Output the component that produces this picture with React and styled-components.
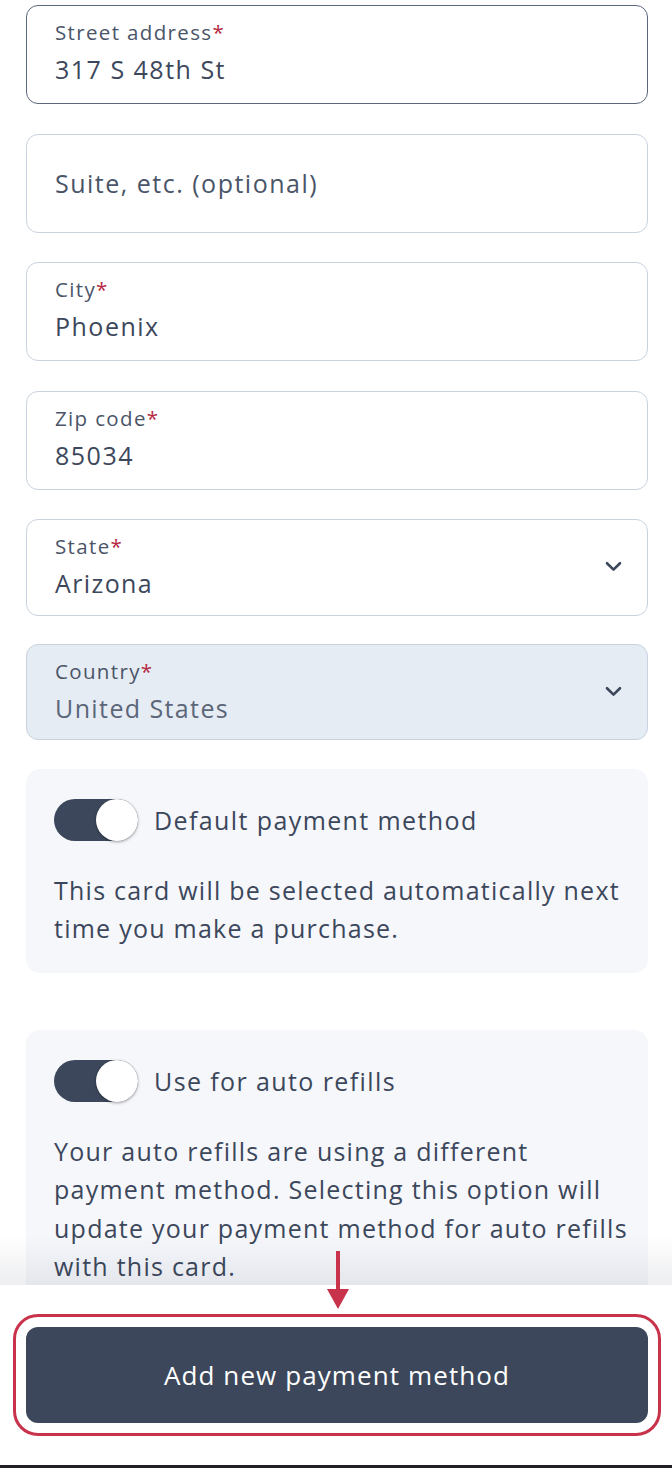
import React from "react";
import styled, { createGlobalStyle } from "styled-components";

const Global = createGlobalStyle`
  html, body { margin: 0; padding: 0; background: #fff; }
  body { font-family: "Open Sans", "Noto Sans", sans-serif; color: #3c475b; }
  * { box-sizing: border-box; }
`;

const Screen = styled.div`
  width: 672px;
  height: 1468px;
  display: flex;
  flex-direction: column;
  overflow: hidden;
  border-bottom: 3px solid #1f2124;
`;

const Scroll = styled.div`
  flex: 1;
  min-height: 0;
  overflow: hidden;
  padding: 5px 24px 0 26px;
  display: flex;
  flex-direction: column;
`;

const Field = styled.label`
  flex-shrink: 0;
  display: flex;
  flex-direction: column;
  justify-content: ${(p) => (p.$centered ? "center" : "flex-start")};
  height: ${(p) => p.$h || 99}px;
  margin-bottom: ${(p) => p.$mb ?? 29.5}px;
  padding: ${(p) => (p.$centered ? "0 28px" : "13px 28px 0 28px")};
  border: ${(p) => (p.$focused ? "1.5px solid #5b677b" : "1.5px solid #c9d2df")};
  border-radius: 12px;
  background: ${(p) => (p.$disabled ? "#e6ecf4" : "#fff")};
  position: relative;
`;

const Label = styled.span`
  font-size: 20.5px;
  line-height: 26px;
  color: #4a5568;
  letter-spacing: 1.35px;
`;

const Req = styled.span`
  color: #b5283f;
`;

const Input = styled.input`
  border: none;
  outline: none;
  background: transparent;
  padding: 0;
  margin-top: ${(p) => (p.$bare ? 0 : 6)}px;
  font-family: inherit;
  font-size: 25px;
  line-height: 36px;
  height: 36px;
  color: #3c475b;
  letter-spacing: 1.5px;
  &::placeholder {
    color: #4a5568;
    opacity: 1;
  }
`;

const Value = styled.span`
  margin-top: 6px;
  font-size: 25px;
  line-height: 36px;
  color: ${(p) => (p.$muted ? "#5b6679" : "#3c475b")};
  letter-spacing: 1.4px;
`;

const Chevron = styled.svg`
  position: absolute;
  right: 25px;
  top: 50%;
  margin-top: -6px;
  width: 17px;
  height: 11px;
`;

const Card = styled.section`
  flex-shrink: 0;
  background: #f5f7fb;
  border-radius: 14px;
  padding: 30px 18px 25px 28px;
  margin-bottom: ${(p) => p.$mb || 0}px;
`;

const ToggleRow = styled.div`
  display: flex;
  align-items: center;
  gap: 16px;
`;

const Track = styled.span`
  position: relative;
  width: 84px;
  height: 42px;
  border-radius: 21px;
  background: ${(p) => (p.$on ? "#3c475b" : "#c9d2df")};
  flex-shrink: 0;
  &::after {
    content: "";
    position: absolute;
    top: 0;
    right: ${(p) => (p.$on ? "0" : "auto")};
    left: ${(p) => (p.$on ? "auto" : "0")};
    width: 42px;
    height: 42px;
    border-radius: 50%;
    background: #fff;
    box-shadow: 0 1px 3px rgba(0, 0, 0, 0.35);
  }
`;

const ToggleLabel = styled.span`
  font-size: 25px;
  line-height: 32px;
  color: #3c475b;
  letter-spacing: 1.4px;
`;

const Desc = styled.p`
  margin: 30px 0 0 0;
  font-size: 25px;
  line-height: 38.5px;
  color: #3c475b;
  letter-spacing: 1.25px;
`;

const Footer = styled.footer`
  position: relative;
  height: 180px;
  flex-shrink: 0;
  background: #fff;
  padding: 42px 24px 42px 26px;
  &::before {
    content: "";
    position: absolute;
    left: 0;
    right: 0;
    bottom: 100%;
    height: 50px;
    background: linear-gradient(to bottom, rgba(30, 40, 60, 0), rgba(30, 40, 60, 0.08));
    pointer-events: none;
  }
`;

const Arrow = styled.svg`
  position: absolute;
  left: 327px;
  top: -34px;
  width: 22px;
  height: 58px;
`;

const PrimaryButton = styled.button`
  width: 100%;
  height: 96px;
  border: none;
  border-radius: 12px;
  background: #3c475b;
  color: #fff;
  font-family: inherit;
  font-size: 26px;
  letter-spacing: 1.1px;
  outline: 3px solid #c8324a;
  outline-offset: 10px;
  cursor: pointer;
`;

const ChevronIcon = () => (
  <Chevron viewBox="0 0 17 11" fill="none">
    <path d="M2 2.2 L8.5 8.6 L15 2.2" stroke="#3c475b" strokeWidth="2.6" strokeLinecap="round" strokeLinejoin="round" />
  </Chevron>
);

export default function App() {
  return (
    <>
      <Global />
      <Screen>
        <Scroll>
          <Field $focused>
            <Label>
              Street address<Req>*</Req>
            </Label>
            <Input readOnly defaultValue="317 S 48th St" />
          </Field>
          <Field $centered>
            <Input $bare placeholder="Suite, etc. (optional)" />
          </Field>
          <Field>
            <Label>
              City<Req>*</Req>
            </Label>
            <Input readOnly defaultValue="Phoenix" />
          </Field>
          <Field $mb={29}>
            <Label>
              Zip code<Req>*</Req>
            </Label>
            <Input readOnly defaultValue="85034" />
          </Field>
          <Field $h={97} $mb={28}>
            <Label>
              State<Req>*</Req>
            </Label>
            <Value>Arizona</Value>
            <ChevronIcon />
          </Field>
          <Field $h={96} $mb={29} $disabled>
            <Label>
              Country<Req>*</Req>
            </Label>
            <Value $muted>United States</Value>
            <ChevronIcon />
          </Field>
          <Card $mb={57}>
            <ToggleRow>
              <Track $on />
              <ToggleLabel>Default payment method</ToggleLabel>
            </ToggleRow>
            <Desc>This card will be selected automatically next time you make a purchase.</Desc>
          </Card>
          <Card>
            <ToggleRow>
              <Track $on />
              <ToggleLabel>Use for auto refills</ToggleLabel>
            </ToggleRow>
            <Desc>
              Your auto refills are using a different payment method. Selecting this option will update your
              payment method for auto refills with this card.
            </Desc>
          </Card>
        </Scroll>
        <Footer>
          <Arrow viewBox="0 0 22 58">
            <rect x="9" y="0" width="4" height="40" fill="#c8324a" />
            <path d="M0 38 L22 38 L11 58 Z" fill="#c8324a" />
          </Arrow>
          <PrimaryButton>Add new payment method</PrimaryButton>
        </Footer>
      </Screen>
    </>
  );
}
